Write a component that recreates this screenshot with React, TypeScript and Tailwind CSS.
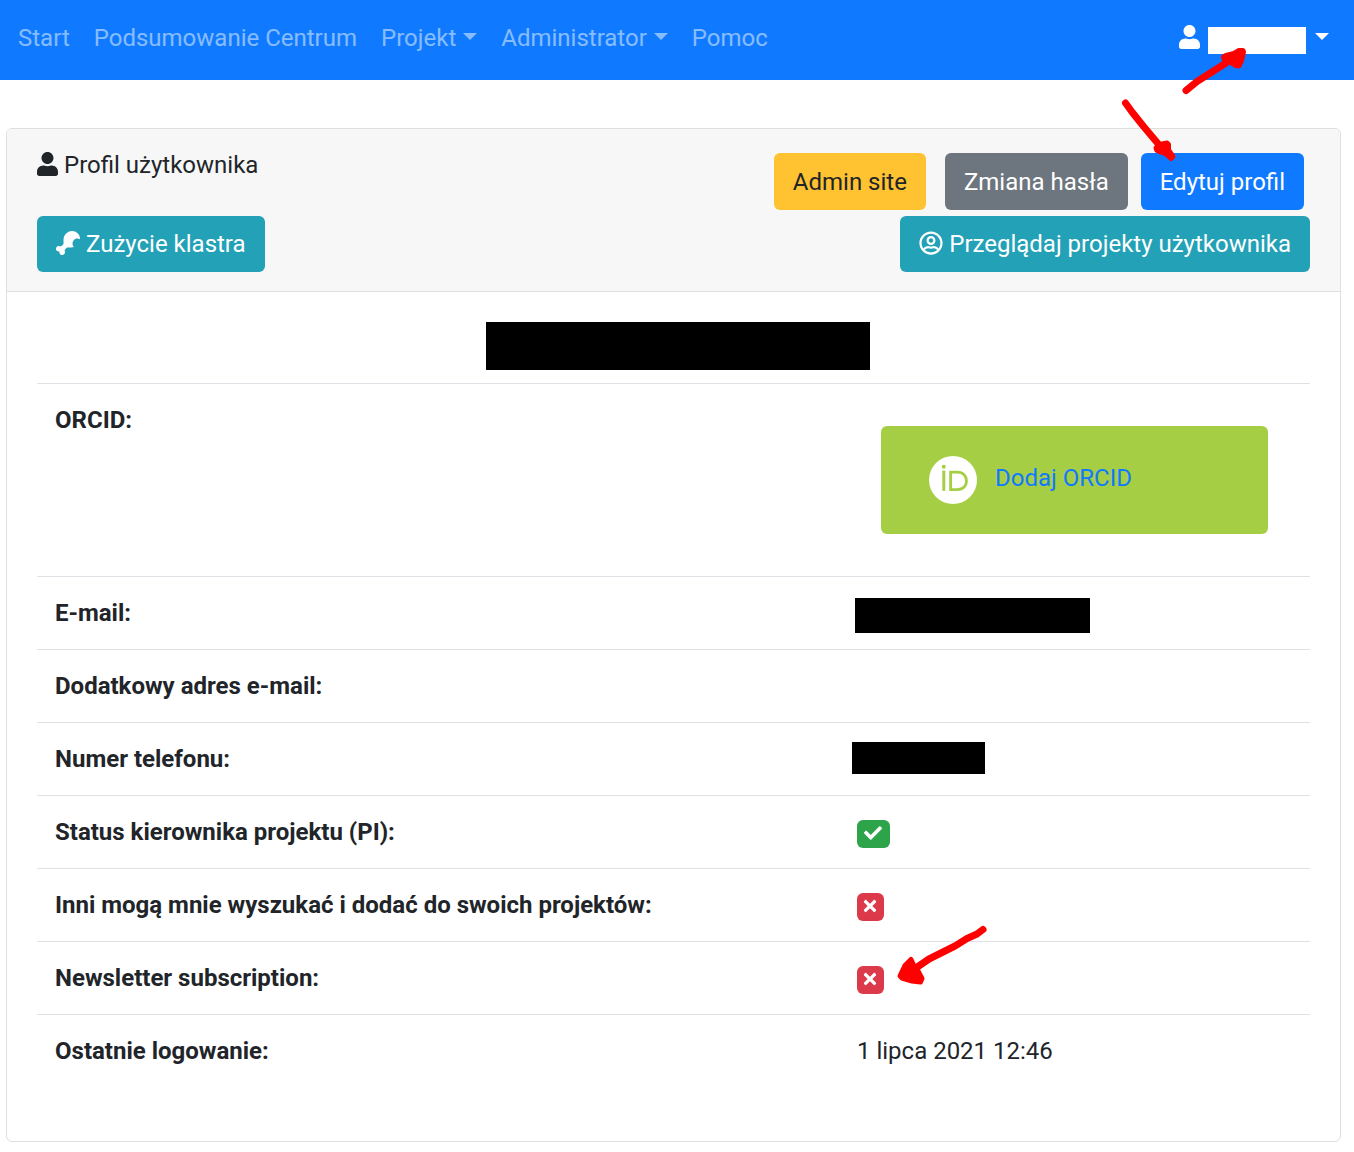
import type { ReactNode } from "react";
import { FaCheck, FaDrumstickBite, FaRegUserCircle, FaTimes, FaUser } from "react-icons/fa";

function Caret() {
  return (
    <span
      aria-hidden="true"
      className="ml-[7px] mb-1 inline-block h-0 w-0 border-x-[7px] border-t-[7px] border-x-transparent border-t-current"
    />
  );
}

function NavLink({ children }: { children: ReactNode }) {
  return (
    <a href="#" className="text-white/50 hover:text-white/75">
      {children}
    </a>
  );
}

function NavMenu({ children }: { children: ReactNode }) {
  return (
    <button type="button" className="flex items-center text-white/50 hover:text-white/75">
      {children}
      <Caret />
    </button>
  );
}

function Button({ tone, children }: { tone: string; children: ReactNode }) {
  return (
    <button
      type="button"
      className={`relative flex items-center justify-center rounded-md px-[19px] py-[10px] ${tone}`}
    >
      {children}
    </button>
  );
}

function YesBadge() {
  return (
    <span role="img" aria-label="Tak" className="flex h-7 w-[33px] items-center justify-center rounded-md bg-[#2ea44a] pb-[2px] text-lg text-white">
      <FaCheck />
    </span>
  );
}

function NoBadge({ children }: { children?: ReactNode }) {
  return (
    <span role="img" aria-label="Nie" className="relative flex h-7 w-[27px] items-center justify-center rounded-md bg-[#dc3a4b] pb-[2px] text-lg text-white">
      <FaTimes />
      {children}
    </span>
  );
}

function OrcidLogo() {
  return (
    <svg viewBox="0 0 48 48" className="h-12 w-12 shrink-0" aria-hidden="true">
      <circle cx="24" cy="24" r="24" fill="#fff" />
      <circle cx="14.8" cy="10.8" r="2" fill="#a6ce45" />
      <path d="M14.8 14.6V34.8" stroke="#a6ce45" strokeWidth="3" fill="none" />
      <path
        d="M21.6 16.2H28.5C34.2 16.2 37.5 20.2 37.5 25C37.5 29.8 34.2 33.6 28.5 33.6H21.6Z"
        stroke="#a6ce45"
        strokeWidth="2.8"
        fill="none"
      />
    </svg>
  );
}

function Row({ label, children }: { label: string; children?: ReactNode }) {
  return (
    <tr className="border-t border-[#dee2e6]">
      <th scope="row" className="w-[63%] p-[18px] text-left align-top font-bold">
        {label}
      </th>
      <td className="p-[18px] align-top">
        <div className="min-h-9">{children}</div>
      </td>
    </tr>
  );
}

export default function App() {
  return (
    <div className="min-h-screen bg-white pb-[10px] font-['Roboto',sans-serif] text-2xl/9 text-[#212529]">
      <nav className="flex items-start justify-between bg-[#0f7aff] px-[18px] pt-5 pb-6">
        <div className="flex gap-6">
          <NavLink>Start</NavLink>
          <NavLink>Podsumowanie Centrum</NavLink>
          <NavMenu>Projekt</NavMenu>
          <NavMenu>Administrator</NavMenu>
          <NavLink>Pomoc</NavLink>
        </div>
        <button type="button" aria-label="Konto" className="mr-[7px] flex h-9 items-center text-white">
          <FaUser className="mb-[2px] w-[21px]" />
          <span className="relative mt-[5px] ml-2 h-[27px] w-[98px] bg-white">
            <svg
              viewBox="0 0 70 52"
              className="pointer-events-none absolute top-[17px] left-[-28px] z-10 h-[52px] w-[70px]"
              aria-hidden="true"
            >
              <path d="M6 46.5L17 37.5L28 30.5L46 19" stroke="#f00" strokeWidth="7" strokeLinecap="round" strokeLinejoin="round" fill="none" />
              <path d="M43.5 13L46 11.5L54 9.5L59 6.5L63 6.5L63.5 8L61.5 17L59 22L56 21.5L50 18L44 15Z" fill="#f00" stroke="#f00" strokeWidth="5" strokeLinejoin="round" />
            </svg>
          </span>
          <span className="ml-[2px] flex">
            <Caret />
          </span>
        </button>
      </nav>

      <main className="mt-12 mr-[13px] ml-[6px] rounded-md border border-[#dfdfdf]">
        <header className="rounded-t-md border-b border-[#dfdfdf] bg-[#f7f7f7] px-[30px] pt-[18px] pb-[19px]">
          <div className="flex items-start justify-between">
            <h1 className="flex items-center gap-[6px]">
              <FaUser className="mb-[2px] w-[21px]" />
              Profil użytkownika
            </h1>
            <div className="mt-[6px] mr-[6px] flex h-[57px] items-stretch">
              <Button tone="bg-[#ffc230]">Admin site</Button>
              <div className="ml-[19px] flex gap-[13px]">
                <Button tone="bg-[#6d757e] text-white">Zmiana hasła</Button>
                <Button tone="bg-[#0f7aff] text-white">
                  Edytuj profil
                  <svg
                    viewBox="0 0 64 66"
                    className="pointer-events-none absolute top-[-55px] left-[-21px] z-10 h-[66px] w-16"
                    aria-hidden="true"
                  >
                    <path d="M5.5 5L12 14L24 29L40 48" stroke="#f00" strokeWidth="7" strokeLinecap="round" strokeLinejoin="round" fill="none" />
                    <path d="M36 50L40 46.5L47 45L48.5 46.5L48.5 52L53 58.5L51 60.5L46 56L37 52.5Z" fill="#f00" stroke="#f00" strokeWidth="5" strokeLinejoin="round" />
                  </svg>
                </Button>
              </div>
            </div>
          </div>
          <div className="mt-[6px] flex justify-between">
            <Button tone="bg-[#22a1b7] text-white gap-[6px]">
              <FaDrumstickBite className="mb-[2px]" />
              Zużycie klastra
            </Button>
            <Button tone="bg-[#22a1b7] text-white gap-[6px]">
              <FaRegUserCircle className="mb-[2px]" />
              Przeglądaj projekty użytkownika
            </Button>
          </div>
        </header>

        <section className="p-[30px]">
          <div className="flex justify-center pb-[13px] pl-[9px]">
            <div className="h-12 w-96 bg-black" />
          </div>
          <table className="mb-6 w-full border-collapse">
            <tbody>
              <Row label="ORCID:">
                <div className="m-6 flex h-[108px] items-center rounded-md bg-[#a6ce45] px-12">
                  <OrcidLogo />
                  <a href="#" className="mb-1 ml-[18px] text-[#0f7aff]">
                    Dodaj ORCID
                  </a>
                </div>
              </Row>
              <Row label="E-mail:">
                <div className="flex pt-[3px]">
                  <div className="-mb-1 -ml-[2px] h-[35px] w-[235px] bg-black" />
                </div>
              </Row>
              <Row label="Dodatkowy adres e-mail:" />
              <Row label="Numer telefonu:">
                <div className="flex pt-[1px]">
                  <div className="-ml-[5px] h-8 w-[133px] bg-black" />
                </div>
              </Row>
              <Row label="Status kierownika projektu (PI):">
                <div className="flex pt-[6px]">
                  <YesBadge />
                </div>
              </Row>
              <Row label="Inni mogą mnie wyszukać i dodać do swoich projektów:">
                <div className="flex pt-[6px]">
                  <NoBadge />
                </div>
              </Row>
              <Row label="Newsletter subscription:">
                <div className="flex pt-[6px]">
                  <NoBadge>
                    <svg
                      viewBox="0 0 100 66"
                      className="pointer-events-none absolute top-[-42px] left-9 z-10 h-[66px] w-[100px]"
                      aria-hidden="true"
                    >
                      <path d="M90 5.5L84 10L74 14.5L62 22L48 29L36 35L20 46" stroke="#f00" strokeWidth="7" strokeLinecap="round" strokeLinejoin="round" fill="none" />
                      <path d="M7 52L12 41.5L18 35.5L21 42L25 47L29 54.5L27.5 58L19 57L9 54Z" fill="#f00" stroke="#f00" strokeWidth="5" strokeLinejoin="round" />
                    </svg>
                  </NoBadge>
                </div>
              </Row>
              <Row label="Ostatnie logowanie:">1 lipca 2021 12:46</Row>
            </tbody>
          </table>
        </section>
      </main>
    </div>
  );
}
